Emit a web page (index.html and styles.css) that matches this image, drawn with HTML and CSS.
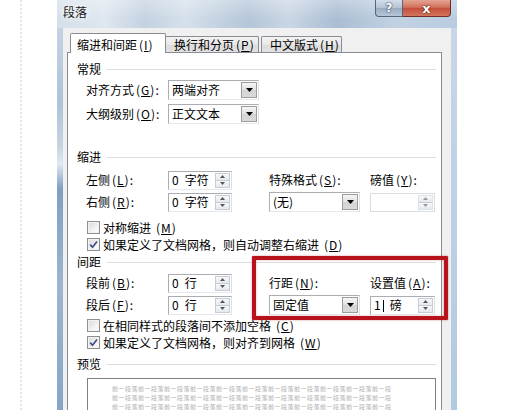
FILE: index.html
```html
<!DOCTYPE html>
<html lang="zh-CN">
<head>
  <meta charset="UTF-8">
  <title>段落</title>
  <link rel="stylesheet" href="styles.css">
</head>
<body>
<div class="page">
  <div class="gutter"></div>

  <div class="window">
    <div class="titlebar">
      <span class="title">段落</span>
      <div class="caption">
        <span class="btn-help">?</span>
        <span class="btn-close">x</span>
      </div>
    </div>

    <div class="client">
      <div class="tabs">
        <div class="tab active">缩进和间距<span class="k">(<u>I</u>)</span></div>
        <div class="tab t2">换行和分页<span class="k">(<u>P</u>)</span></div>
        <div class="tab t3">中文版式<span class="k">(<u>H</u>)</span></div>
      </div>

      <div class="panel">
        <!-- 常规 -->
        <div class="group-title">常规</div>
        <div class="line-row">
          <label>对齐方式<span class="k">(<u>G</u>):</span></label>
          <div class="combo w91"><span>两端对齐</span><i class="drop"><svg width="7" height="4" viewBox="0 0 7 4"><path d="M0 0h7L3.5 4z" fill="#000"/></svg></i></div>
        </div>
        <div class="line-row">
          <label>大纲级别<span class="k">(<u>O</u>):</span></label>
          <div class="combo w91"><span>正文文本</span><i class="drop"><svg width="7" height="4" viewBox="0 0 7 4"><path d="M0 0h7L3.5 4z" fill="#000"/></svg></i></div>
        </div>

        <!-- 缩进 -->
        <div class="group-title sec-indent">缩进</div>
        <div class="grid grid-indent">
          <label>左侧<span class="k">(<u>L</u>):</span></label>
          <div class="spin w64"><span>0&ensp;字符</span><i class="arrows"><b><svg width="5" height="3" viewBox="0 0 5 3"><path d="M0 3h5L2.5 0z" fill="#555"/></svg></b><b><svg width="5" height="3" viewBox="0 0 5 3"><path d="M0 0h5L2.5 3z" fill="#555"/></svg></b></i></div>
          <label>特殊格式<span class="k">(<u>S</u>):</span></label>
          <label>磅值<span class="k">(<u>Y</u>):</span></label>

          <label>右侧<span class="k">(<u>R</u>):</span></label>
          <div class="spin w64"><span>0&ensp;字符</span><i class="arrows"><b><svg width="5" height="3" viewBox="0 0 5 3"><path d="M0 3h5L2.5 0z" fill="#555"/></svg></b><b><svg width="5" height="3" viewBox="0 0 5 3"><path d="M0 0h5L2.5 3z" fill="#555"/></svg></b></i></div>
          <div class="combo w91"><span>(无)</span><i class="drop"><svg width="7" height="4" viewBox="0 0 7 4"><path d="M0 0h7L3.5 4z" fill="#000"/></svg></i></div>
          <div class="spin w65 disabled"><span></span><i class="arrows"><b><svg width="5" height="3" viewBox="0 0 5 3"><path d="M0 3h5L2.5 0z" fill="#999"/></svg></b><b><svg width="5" height="3" viewBox="0 0 5 3"><path d="M0 0h5L2.5 3z" fill="#999"/></svg></b></i></div>
        </div>
        <div class="check first"><i class="box"></i>对称缩进<span class="k">(<u>M</u>)</span></div>
        <div class="check"><i class="box"><svg width="9" height="9" viewBox="0 0 9 9"><path d="M1.2 4.6l2.3 2.6L8 1.4" fill="none" stroke="#3b4f86" stroke-width="1.7"/></svg></i>如果定义了文档网格，则自动调整右缩进<span class="k">(<u>D</u>)</span></div>

        <!-- 间距 -->
        <div class="group-title sec-spacing">间距</div>
        <div class="grid grid-spacing">
          <label>段前<span class="k">(<u>B</u>):</span></label>
          <div class="spin w64"><span>0&ensp;行</span><i class="arrows"><b><svg width="5" height="3" viewBox="0 0 5 3"><path d="M0 3h5L2.5 0z" fill="#555"/></svg></b><b><svg width="5" height="3" viewBox="0 0 5 3"><path d="M0 0h5L2.5 3z" fill="#555"/></svg></b></i></div>
          <label>行距<span class="k">(<u>N</u>):</span></label>
          <label>设置值<span class="k">(<u>A</u>):</span></label>

          <label>段后<span class="k">(<u>F</u>):</span></label>
          <div class="spin w64"><span>0&ensp;行</span><i class="arrows"><b><svg width="5" height="3" viewBox="0 0 5 3"><path d="M0 3h5L2.5 0z" fill="#555"/></svg></b><b><svg width="5" height="3" viewBox="0 0 5 3"><path d="M0 0h5L2.5 3z" fill="#555"/></svg></b></i></div>
          <div class="combo w91"><span>固定值</span><i class="drop"><svg width="7" height="4" viewBox="0 0 7 4"><path d="M0 0h7L3.5 4z" fill="#000"/></svg></i></div>
          <div class="spin w65"><span>1<i class="caret"></i>&ensp;磅</span><i class="arrows"><b><svg width="5" height="3" viewBox="0 0 5 3"><path d="M0 3h5L2.5 0z" fill="#555"/></svg></b><b><svg width="5" height="3" viewBox="0 0 5 3"><path d="M0 0h5L2.5 3z" fill="#555"/></svg></b></i></div>
        </div>
        <div class="check first-sp"><i class="box"></i>在相同样式的段落间不添加空格<span class="k">(<u>C</u>)</span></div>
        <div class="check"><i class="box"><svg width="9" height="9" viewBox="0 0 9 9"><path d="M1.2 4.6l2.3 2.6L8 1.4" fill="none" stroke="#3b4f86" stroke-width="1.7"/></svg></i>如果定义了文档网格，则对齐到网格<span class="k">(<u>W</u>)</span></div>

        <!-- 预览 -->
        <div class="group-title sec-preview">预览</div>
        <div class="preview">
          <div>前一段落前一段落前一段落前一段落前一段落前一段落前一段落前一段落前一段落前一段落前一段</div>
          <div>前一段落前一段落前一段落前一段落前一段落前一段落前一段落前一段落前一段落前一段落前一段</div>
          <div>前一段落前一段落前一段落前一段落前一段落前一段落前一段落前一段落前一段落前一段落前一段</div>
        </div>
      </div>
    </div>
  </div>

  <div class="highlight"></div>
</div>
</body>
</html>
```

FILE: styles.css
```css
* { box-sizing: border-box; }
body { margin: 0; background: #fff; font-family: "Noto Sans CJK SC", sans-serif; font-size: 12px; color: #000; }
.page { position: relative; display: flex; height: 410px; overflow: hidden; }
.gutter { flex: none; width: 22px; border-right: 2px dotted #e2e2e2; }

/* window frame */
.window {
  flex: none;
  width: 400px;
  margin-left: 35px;
  padding: 0 6px;
  background:
    linear-gradient(to bottom, #ccd9e6 0, #aec3d8 25%, #c7d5e3 36%, #dfe8f0 40%, #7f9fc2 46%, #9db6cf 70%, #86a5c6 100%) left top / 6px 100% no-repeat,
    linear-gradient(to bottom, #c9d8e8, #b3c9e2) right top / 6px 100% no-repeat,
    #c8d6e5;
}
.titlebar {
  display: flex;
  justify-content: space-between;
  align-items: flex-start;
  height: 28px;
  margin: 0 -6px;
  padding: 0 6px;
  background:
    linear-gradient(to bottom, rgba(255,255,255,0.3), rgba(255,255,255,0) 70%),
    linear-gradient(to right, #d4dfea 0%, #dfe7ef 12%, #c3d2e1 22%, #d5e0eb 32%, #b4c6d9 48%, #c9d6e4 58%, #a9bdd3 70%, #c2d2e3 85%, #b8cbe0 100%);
}
.title { margin-top: 5px; line-height: 14px; color: #1a1a1a; text-shadow: 0 0 5px #fff, 0 0 9px #fff; }
.caption { display: flex; }
.btn-help, .btn-close {
  display: flex;
  align-items: center;
  justify-content: center;
  height: 17px;
  color: #fff;
  font-family: "DejaVu Sans", sans-serif;
  font-weight: bold;
  font-size: 12px;
  border: 1px solid #56667c;
  border-top: none;
}
.btn-help {
  width: 28px;
  border-radius: 0 0 0 4px;
  background: linear-gradient(#d3dee9, #b4c3d4 50%, #9aacc2 52%, #b7c6d8);
  text-shadow: 0 0 2px #2b3a50, 0 0 1px #2b3a50;
}
.btn-close {
  width: 48px;
  border-color: #6e3025;
  border-left: none;
  border-radius: 0 0 4px 0;
  background: linear-gradient(#e6a493, #d2725c 45%, #c3503a 52%, #d5765e);
  font-size: 13px;
  text-shadow: 0 0 2px #5a1408, 0 0 1px #5a1408;
}

/* dialog body */
.client { height: 382px; padding: 5px 9px 0 4px; background: #f0f0f0; }
.tabs { display: flex; align-items: flex-end; height: 19px; margin-left: 3px; }
.tab {
  height: 16px;
  padding: 1px 0 0 8px;
  line-height: 14px;
  border: 1px solid #898c95;
  border-bottom: none;
  border-radius: 2px 2px 0 0;
  background: linear-gradient(#f3f3f3, #e8e8e8 50%, #dcdcdc 52%, #e2e2e2);
  white-space: nowrap;
}
.tab.active {
  position: relative;
  z-index: 1;
  width: 96px;
  height: 20px;
  margin-bottom: -1px;
  padding: 4px 0 0 6px;
  background: #fff;
}
.t2 { width: 94px; margin-left: -1px; }
.t3 { width: 81px; margin-left: 2px; }
.k { letter-spacing: 1px; padding-left: 2px; }

.panel { height: 400px; padding: 9px 5px 0 9px; border: 1px solid #898c95; background: #fff; }
.group-title { display: flex; align-items: center; gap: 6px; height: 14px; line-height: 14px; }
.group-title::after { content: ""; flex: 1; border-top: 1px solid #dcdcdc; }
.sec-indent { margin-top: 26px; }
.sec-spacing { margin-top: 2px; }
.sec-preview { margin-top: 6px; }

.line-row { display: flex; align-items: center; height: 20px; margin-top: 4px; padding-left: 9px; }
.line-row label { width: 82px; }
label { line-height: 14px; white-space: nowrap; }

.grid {
  display: grid;
  grid-template-columns: 82px 101px 101px 65px;
  grid-template-rows: 20px 20px;
  row-gap: 2px;
  align-items: center;
  padding-left: 9px;
}
.grid-indent { margin-top: 6px; }
.grid-spacing { margin-top: 4px; }

.combo, .spin {
  display: flex;
  align-items: center;
  border: 1px solid #abadb3;
  border-right-color: #dbdfe6;
  border-bottom-color: #e3e9ef;
  background: #fff;
  padding-left: 3px;
  white-space: nowrap;
}
.combo { height: 20px; }
.spin { height: 19px; }
.combo > span, .spin > span { flex: 1; line-height: 14px; }
.w91 { width: 91px; }
.w64 { width: 64px; }
.w65 { width: 65px; }

.drop {
  display: flex;
  align-items: center;
  justify-content: center;
  width: 16px;
  align-self: stretch;
  margin: 1px;
  border: 1px solid #9c9c9c;
  background: linear-gradient(#f5f5f5, #e2e2e2 50%, #d4d4d4 52%, #dadada);
}
.arrows {
  display: flex;
  flex-direction: column;
  width: 15px;
  align-self: stretch;
  margin: 1px;
  border: 1px solid #c7ccd4;
}
.arrows b {
  flex: 1;
  display: flex;
  align-items: center;
  justify-content: center;
  background: linear-gradient(#f7f9fb, #e4e9ef);
}
.arrows b + b { border-top: 1px solid #c7ccd4; }
.spin.disabled { border-color: #d9dde3; }
.spin.disabled .arrows { border-color: #dde1e6; }
.caret { display: inline-block; width: 1px; height: 12px; margin: 0 0 0 2px; background: #000; vertical-align: -2px; }

.check { display: flex; align-items: center; gap: 3px; height: 17px; padding-left: 10px; line-height: 14px; white-space: nowrap; }
.check.first { margin-top: 7px; }
.check.first-sp { margin-top: 2px; }
.box {
  display: flex;
  align-items: center;
  justify-content: center;
  flex: none;
  width: 13px;
  height: 13px;
  border: 1px solid #8e8f8f;
  background: linear-gradient(135deg, #d9d9d9, #f6f6f6 70%, #fdfdfd);
  box-shadow: inset 0 0 0 1px #f2f2f2;
}

.preview {
  height: 60px;
  margin: 7px 0 0 10px;
  padding: 5px 0 0 24px;
  border: 1px solid #808080;
  font-size: 6px;
  letter-spacing: 0.5px;
  line-height: 9px;
  color: #b0b0b0;
  white-space: nowrap;
  overflow: hidden;
}

/* red annotation box drawn over the dialog */
.highlight {
  position: absolute;
  left: 252px;
  top: 256px;
  width: 196px;
  height: 64px;
  border: 4px solid #b8131c;
  border-radius: 1px;
  box-shadow: 0 0 2px rgba(170, 0, 0, 0.5), inset 0 0 2px rgba(170, 0, 0, 0.4);
}
```
